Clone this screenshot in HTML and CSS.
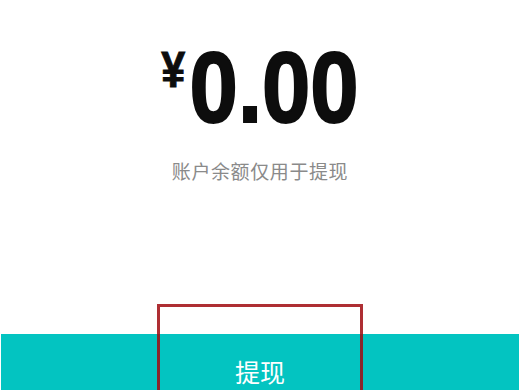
FILE: index.html
```html
<!DOCTYPE html>
<html lang="zh-CN">
<head>
<meta charset="utf-8">
<link rel="stylesheet" href="styles.css">
</head>
<body>
<div class="page">
  <div class="amount">
    <span class="currency">¥</span>
    <span class="value">0.00</span>
  </div>
  <div class="note">账户余额仅用于提现</div>
  <div class="spacer"></div>
  <div class="action">
    <div class="btn">提现</div>
  </div>
  <div class="highlight"></div>
</div>
</body>
</html>
```
FILE: styles.css
```css
html, body {
  margin: 0;
  padding: 0;
  background: #ffffff;
}
.page {
  position: relative;
  width: 520px;
  height: 390px;
  overflow: hidden;
  display: flex;
  flex-direction: column;
  font-family: "Noto Sans CJK SC", "Noto Sans", sans-serif;
}
.amount {
  margin-top: 37px;
  display: flex;
  justify-content: center;
  align-items: flex-start;
  color: #0d0d0d;
  font-family: "Liberation Sans", sans-serif;
  font-weight: 700;
  transform: scaleX(0.86);
  transform-origin: 260px 0;
}
.currency {
  font-size: 50px;
  line-height: 1;
  margin-top: 8px;
  margin-right: 5px;
  -webkit-text-stroke: 1px #0d0d0d;
}
.value {
  font-size: 101px;
  line-height: 1;
  letter-spacing: 0;
  -webkit-text-stroke: 2px #0d0d0d;
}
.note {
  margin-top: 21px;
  text-align: center;
  font-size: 19px;
  line-height: 24px;
  color: #8a8a8a;
  letter-spacing: 0.6px;
}
.spacer {
  flex: 1;
}
.action {
  padding: 0 1px;
}
.btn {
  height: 74px;
  flex: none;
  background: #03c4c1;
  color: #ffffff;
  font-size: 25px;
  display: flex;
  align-items: center;
  justify-content: center;
  margin-bottom: -18px;
}
.highlight {
  position: absolute;
  left: 157px;
  top: 304px;
  width: 200px;
  height: 100px;
  border: 3px solid rgba(160, 10, 15, 0.85);
}
```
